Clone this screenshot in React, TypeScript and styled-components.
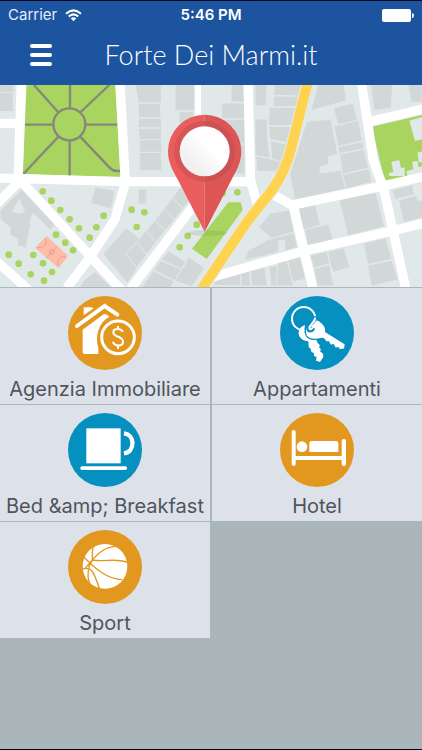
import React from "react";
import styled, { createGlobalStyle } from "styled-components";

const GlobalStyle = createGlobalStyle`
  *, *::before, *::after { box-sizing: border-box; }
  body { margin: 0; font-family: Inter, "Liberation Sans", sans-serif; }
`;

const Screen = styled.div`
  display: flex;
  flex-direction: column;
  min-height: 100vh;
  background: #abb6bb;
  border-top: 1px solid #05061f;
  border-bottom: 1px solid #000;
`;

const Header = styled.header`
  background: #1c54a0;
  color: #fff;
`;

const StatusBar = styled.div`
  display: grid;
  grid-template-columns: 1fr auto 1fr;
  align-items: center;
  height: 28px;
  padding: 0 8px;
  font-size: 15px;
  line-height: 20px;
`;

const Carrier = styled.div`
  display: flex;
  align-items: center;
  gap: 8px;
  color: #e6eefa;
`;

const Clock = styled.time`
  font-weight: 600;
`;

const Battery = styled.svg`
  justify-self: end;
`;

const TitleBar = styled.div`
  display: grid;
  grid-template-columns: 24px 1fr 24px;
  align-items: center;
  height: 56px;
  padding: 0 28px;
`;

const MenuButton = styled.button`
  display: flex;
  flex-direction: column;
  gap: 5px;
  padding: 0 0 5px 2px;
  border: 0;
  background: none;
  cursor: pointer;
`;

const MenuBar = styled.span`
  height: 4px;
  border-radius: 2px;
  background: #fff;
`;

const Title = styled.h1`
  margin: 0;
  padding-bottom: 5px;
  font: 300 27px/36px Lato, "Open Sans", sans-serif;
  text-align: center;
  white-space: nowrap;
`;

const MapArt = styled.svg`
  display: block;
  width: 100%;
  height: auto;
`;

const Grid = styled.nav`
  display: grid;
  grid-template-columns: 1fr 1fr;
  gap: 1px 2px;
  padding-top: 1px;
`;

const Tile = styled.a`
  display: flex;
  flex-direction: column;
  align-items: center;
  gap: 6px;
  height: 116px;
  padding-top: 8px;
  background: #dde2ea;
  color: #50545a;
  text-decoration: none;
`;

const Badge = styled.svg<{ $tone: "orange" | "blue" }>`
  flex: none;
  width: 74px;
  height: 74px;
  border-radius: 50%;
  background: ${(p) => (p.$tone === "orange" ? "#e2981e" : "#0590c0")};
`;

const Label = styled.span`
  font-size: 20px;
  line-height: 27px;
  white-space: nowrap;
`;

const trees = [
  [128, 322], [154, 350], [181, 378], [209, 406], [237, 433], [269, 461], [289, 430], [311, 395],
  [168, 452], [196, 476], [219, 499], [100, 513], [129, 538], [156, 564], [132, 590], [92, 571],
  [56, 539], [26, 512], [395, 377], [433, 385], [410, 429], [668, 328], [712, 325], [590, 422],
  [563, 456], [539, 490],
];

const CityMap = () => (
  <MapArt viewBox="0 3 1266 606" role="img" aria-label="Mappa">
    <rect width="1266" height="612" fill="#e0e8ea" />
    <g fill="#d2d8d8" stroke="#e0e8ea" strokeWidth="3">
      <path d="M-3 0H42V25H-3zM-3 25H40V83H-3z" />
      <path d="M66 316L165 422L150 438L100 388L92 405V425L78 492L52 485V465L30 452V430L12 415L0 405V380L35 345z" />
      <path d="M286 308L345 320L334 374L271 358z" />
      <path d="M415 315H442V361H411z" />
      <path d="M378 432L422 466L450 428L476 450L382 598L309 510z" />
      <path d="M250 590L285 562L335 610H240z" />
      <path d="M405 0H484V57H415zM415 57H482V102H415zM415 132H485V167H418zM415 102H485V132H415zM418 167H485V205H418zM418 205H485V260H418z" />
    </g>
    <path d="M58 345L76 382L60 390L35 383z" fill="#e0e8ea" />
    <path d="M80 0H346L362 280L68 270z" fill="#a9d45f" />
    <g fill="none" stroke="#85887a" strokeWidth="7">
      <circle cx="208" cy="121" r="48" />
      <path d="M210 0V73M209 169V276M75 122H160M256 122H352M102 3L174 84M328 3L242 84M176 157L70 270M240 157L328 250Q338 261 350 261H362" />
    </g>
    <g transform="translate(420 0)" fill="#d2d8d8" stroke="#e0e8ea" strokeWidth="3">
      <path d="M105 0H163V79H105zM117 83H160V120H117z" />
      <path d="M273 0H315V54H273zM245 57H315V105H245zM245 105H315V180H245zM240 180H315V270H240z" />
      <path d="M345 0H382L378 66H345zM345 105H382V160L390 222L345 215zM347 215L455 240V262H350z" />
      <path d="M405 0H500L492 38L400 34zM400 36H492L485 68H400zM388 70H484L473 125H386zM386 127H474L460 180L390 166zM391 170L458 184L438 240L395 224z" />
      <path d="M0 315H20L16 360H-5V318z" />
      <path d="M121 309L156 340L129 374L98 341zM98 341L129 374L103 407L72 374zM72 374L103 407L75 440L45 408zM45 408L75 440L48 474L18 440zM18 440L48 474L20 511L-10 474zM-10 474L20 511L-10 552L-42 508z" />
      <path d="M86 500L140 535L125 555L64 528zM62 530L125 556L104 590L42 558zM40 560L103 592L90 612H4zM145 518L195 552L155 608L105 590z" />
      <path d="M240 556L302 542V604H220z" />
      <path d="M302 565L328 562L332 606H304zM330 560L375 550L382 606H335zM388 548L428 543L440 606H392z" />
    </g>
    <g transform="translate(840 0)" fill="#d2d8d8" stroke="#e0e8ea" strokeWidth="3">
      <path d="M115 0H192L199 50L92 80z" />
      <path d="M160 72L220 57L232 108L174 124zM162 126L235 108L247 171L174 188zM174 188L248 173L251 194L178 209zM179 211L252 196L266 252L187 271zM187 272L268 254L276 294L199 315z" />
      <path d="M80 112L153 106L173 210L146 218V242L120 248V267L181 259L198 315L45 347L29 270z" />
      <path d="M272 0H338L334 72L282 80zM384 0H426V55H393z" />
      <path d="M336 318L398 302L403 331L345 347zM356 348L408 334L415 350L430 345V400L370 416z" />
      <path d="M56 372L106 360L121 423L75 437H65zM74 437L145 420L160 467L83 489zM178 348L287 324L314 428L203 456z" />
      <path d="M-30 388L28 378L42 443L-24 464L-64 430zM-35 466L41 446L52 490L14 502V470H-4V504L-108 530L-95 500z" />
      <path d="M-7 534L22 527L40 606H-10zM22 527L60 517L77 585L38 594zM90 514L140 502L150 538L102 552zM143 503L192 491L210 550L160 565L151 542zM102 554L148 542L162 606H112z" />
      <path d="M251 477L318 462L335 526L262 541zM263 544L336 529L354 588L274 606z" />
    </g>
    <path d="M1116 128L1266 93V278L1154 290z" fill="#a9d45f" />
    <path d="M1228 110L1266 99V166L1245 171zM1174 234L1198 228L1203 252L1214 250V276H1168L1166 268L1180 264zM1220 262L1240 255L1236 234L1252 230L1256 250L1266 246V280H1222zM1252 206L1266 202V235H1257z" fill="#e0e8ea" />
    <g fill="none" stroke="#fff" strokeWidth="28" strokeLinejoin="round">
      <path d="M64 0L54 290M-5 118H60M-5 282L380 293H750M360 0L376 295" />
      <path d="M60 290L-10 360M64 292L366 620M375 300L345 405L270 520L200 612M-10 532L90 622M592 350L392 614" />
      <path d="M594 0V290" strokeWidth="18" />
      <path d="M744 0L752 290L776 375M820 332L880 366L938 610M870 365L1140 308L1270 278" />
      <path d="M1085 0L1102 110L1120 230L1150 310L1217 612M1100 115L1270 75M630 581L915 500L1170 442L1270 418" />
    </g>
    <path d="M922 0L874 190Q858 260 815 320L740 415L605 615" fill="none" stroke="#e6ebe6" strokeWidth="36" />
    <path d="M922 0L874 190Q858 260 815 320L740 415L605 615" fill="none" stroke="#ffd34f" strokeWidth="30" />
    <g fill="#a9d45f">
      {trees.map(([x, y]) => (
        <circle key={`${x}-${y}`} cx={x} cy={y} r="10" />
      ))}
      <path d="M685 355H722L728 378L620 525L576 494z" />
    </g>
    <path d="M140 457L204 516L176 552L105 491z" fill="#ffbba5" />
    <path d="M172 485L138 524M112 491Q132 492 137 478Q142 468 134 463M174 545Q170 528 181 520Q190 514 198 521" fill="none" stroke="#c49a8c" strokeWidth="2" />
    <circle cx="155" cy="504" r="7" fill="none" stroke="#c49a8c" strokeWidth="2" />
    <ellipse cx="622" cy="447" rx="60" ry="9" fill="#6f9150" opacity=".18" />
    <defs>
      <linearGradient id="face" x1="0" y1="1" x2="1" y2="0">
        <stop offset=".25" stopColor="#f1f1f1" />
        <stop offset=".6" stopColor="#fff" />
      </linearGradient>
    </defs>
    <path d="M614 92A110 110 0 0 0 504 202C504 237 520 263 535 290L614 443z" fill="#ea5d5e" />
    <path d="M614 92A110 110 0 0 1 724 202C724 237 708 263 693 290L614 443z" fill="#dc5656" />
    <circle cx="614" cy="202" r="91" fill="#cd5052" />
    <path d="M614 111A91 91 0 0 0 614 293z" fill="#d75557" />
    <circle cx="614" cy="202" r="75" fill="url(#face)" />
  </MapArt>
);

const HouseIcon = () => (
  <g fill="#fff">
    <path d="M47 34H69L77 37L47 58z" />
    <path d="M27 90L110 30L148 56" fill="none" stroke="#fff" strokeWidth="12" strokeLinecap="round" />
    <path d="M44 101L108 54Q116 52 124 62C92 78 80 122 91 155V174H50Q44 174 44 168z" />
    <circle cx="150" cy="124" r="49" fill="none" stroke="#fff" strokeWidth="9" />
    <path d="M164 108C160 96 136 96 136 109C136 126 165 118 165 137C165 152 139 152 135 137M150 90V102M150 147V159" fill="none" stroke="#fff" strokeWidth="6" />
  </g>
);

const KeysIcon = () => (
  <g fill="#fff">
    <circle cx="71" cy="68" r="35" fill="none" stroke="#fff" strokeWidth="6" />
    <path d="M67 91L75 87C68 117 84 132 109 132L113 141L120 148L117 154L123 160L120 166L129 173L130 183L120 198L108 194L110 183L102 180V172L94 167L92 158L86 153L85 136C58 135 45 108 67 91z" />
    <path d="M100 76C66 90 68 130 103 130C112 131 122 128 129 127L139 138L146 138L151 148L160 146L166 157L174 155L179 162L194 159L196 144L137 107C140 88 119 70 105 71z" stroke="#0590c0" strokeWidth="4" />
    <path d="M105 61C107 77 91 80 86 91C82 107 94 106 100 95" fill="none" stroke="#0590c0" strokeWidth="13" />
    <path d="M106 65C105 78 92 84 88 94C88 104 94 99 99 94" fill="none" stroke="#fff" strokeWidth="6" />
  </g>
);

const CupIcon = () => (
  <g fill="#fff">
    <rect x="55" y="46" width="103" height="105" />
    <rect x="37" y="160" width="140" height="11" rx="5" />
    <path d="M168 61C202 65 202 117 168 121" fill="none" stroke="#fff" strokeWidth="13" />
  </g>
);

const BedIcon = () => (
  <g fill="#fff">
    <rect x="35" y="51" width="12" height="108" rx="6" />
    <rect x="185" y="78" width="13" height="81" rx="6" />
    <rect x="39" y="129" width="150" height="12" />
    <circle cx="66" cy="101" r="16" />
    <path d="M94 84H168Q174 84 175 91V117H88V91Q88 84 94 84z" />
  </g>
);

const BallIcon = () => (
  <g fill="none" stroke="#e2981e" strokeWidth="4">
    <circle cx="111" cy="109" r="67" fill="#fff" stroke="none" />
    <path d="M78 47C70 61 74 75 73 90C96 64 115 50 147 49M73 90C112 98 143 81 184 99M48 82C72 104 109 147 163 149M73 90C58 112 58 138 64 159M42 117C70 109 75 118 96 181M50 117L73 90" />
  </g>
);

const categories = [
  { name: "Agenzia Immobiliare", tone: "orange", Icon: HouseIcon },
  { name: "Appartamenti", tone: "blue", Icon: KeysIcon },
  { name: "Bed &amp; Breakfast", tone: "blue", Icon: CupIcon },
  { name: "Hotel", tone: "orange", Icon: BedIcon },
  { name: "Sport", tone: "orange", Icon: BallIcon },
] as const;

export default function App() {
  return (
    <Screen>
      <GlobalStyle />
      <Header>
        <StatusBar>
          <Carrier>
            Carrier
            <svg width="17" height="13" viewBox="0 0 17 13" fill="none" stroke="#fff" strokeWidth="2" aria-hidden="true">
              <path d="M1 4.8Q8.500 -2 16 4.800M3.700 7.600Q8.500 3.200 13.300 7.600" />
              <path d="M5.700 9.300Q8.500 7 11.300 9.300L8.500 12.200z" fill="#fff" stroke="none" />
            </svg>
          </Carrier>
          <Clock>5:46 PM</Clock>
          <Battery width="32" height="13" viewBox="0 0 32 13" fill="#fff" aria-hidden="true">
            <rect width="29" height="13" rx="2" />
            <path d="M30 4Q32 4 32 6.500Q32 9 30 9z" />
          </Battery>
        </StatusBar>
        <TitleBar>
          <MenuButton type="button" aria-label="Menu">
            <MenuBar />
            <MenuBar />
            <MenuBar />
          </MenuButton>
          <Title>Forte Dei Marmi.it</Title>
        </TitleBar>
      </Header>
      <main>
        <CityMap />
        <Grid aria-label="Categorie">
          {categories.map(({ name, tone, Icon }) => (
            <Tile key={name} href="#">
              <Badge $tone={tone} viewBox="0 0 222 222" aria-hidden="true">
                <Icon />
              </Badge>
              <Label>{name}</Label>
            </Tile>
          ))}
        </Grid>
      </main>
    </Screen>
  );
}
